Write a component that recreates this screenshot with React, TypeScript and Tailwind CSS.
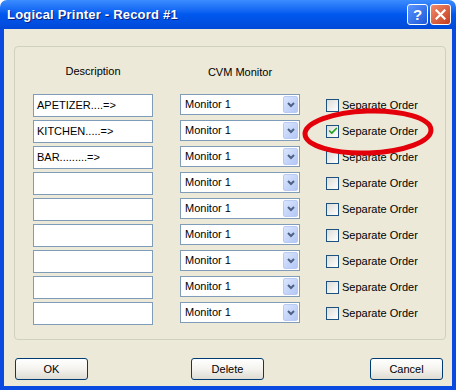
import { Check } from 'lucide-react';

interface Row {
  description: string;
  monitor: string;
  separate: boolean;
}

const rows: Row[] = [
  { description: 'APETIZER....=>', monitor: 'Monitor 1', separate: false },
  { description: 'KITCHEN.....=>', monitor: 'Monitor 1', separate: true },
  { description: 'BAR.........=>', monitor: 'Monitor 1', separate: false },
  { description: '', monitor: 'Monitor 1', separate: false },
  { description: '', monitor: 'Monitor 1', separate: false },
  { description: '', monitor: 'Monitor 1', separate: false },
  { description: '', monitor: 'Monitor 1', separate: false },
  { description: '', monitor: 'Monitor 1', separate: false },
  { description: '', monitor: 'Monitor 1', separate: false },
];

const XpButton = ({ label, className = '' }: { label: string; className?: string }) => (
  <button
    className={
      'w-[73px] h-[22px] rounded-[3px] border border-[#003c74] bg-linear-to-b from-white via-[#f4f3ee] to-[#dedcd2] text-[11px] text-black leading-none ' +
      className
    }
  >
    {label}
  </button>
);

const Combo = ({ value }: { value: string }) => (
  <div className="w-[120px] h-[21px] border border-[#7f9db9] bg-white flex items-center">
    <span className="pl-[4px] text-[11px] text-black">{value}</span>
    <div className="ml-auto mr-[1px] w-[15px] h-[17px] rounded-[2px] border border-[#b9cbf5] bg-linear-to-br from-[#dbe6fd] to-[#b3c7f6] flex items-center justify-center">
      <svg width="8" height="6" viewBox="0 0 8 6">
        <polyline points="1,1 4,4 7,1" fill="none" stroke="#4d6185" strokeWidth="2" />
      </svg>
    </div>
  </div>
);

const CheckBox = ({ checked }: { checked: boolean }) => (
  <div className="w-[13px] h-[13px] border border-[#1c5180] bg-linear-to-br from-[#dcdcd7] to-white flex items-center justify-center">
    {checked && <Check size={10} strokeWidth={4} className="text-[#21a121]" />}
  </div>
);

export default function App() {
  return (
    <div
      className="relative w-[456px] h-[390px] flex flex-col"
      style={{ fontFamily: '"Liberation Sans", Arial, sans-serif' }}
    >
      {/* Title bar */}
      <div className="h-[29px] rounded-t-[7px] bg-linear-to-b from-[#3b8cff] via-[#0058ee] to-[#0049d8] flex items-center pl-[7px] pr-[5px]">
        <span
          className="text-white font-bold text-[13px] tracking-[0.2px]"
          style={{ textShadow: '1px 1px 0 #0a1e80' }}
        >
          Logical Printer - Record #1
        </span>
        <div className="ml-auto flex gap-[2px]">
          <div className="w-[21px] h-[21px] rounded-[3px] border border-white bg-linear-to-br from-[#5a95ff] to-[#1f57d8] flex items-center justify-center text-white font-bold text-[15px] leading-none">
            ?
          </div>
          <div className="w-[21px] h-[21px] rounded-[3px] border border-white bg-linear-to-br from-[#f08a6a] to-[#c53a1a] flex items-center justify-center">
            <svg width="11" height="11" viewBox="0 0 11 11">
              <path d="M1.5 1.5 L9.5 9.5 M9.5 1.5 L1.5 9.5" stroke="white" strokeWidth="2.2" strokeLinecap="square" />
            </svg>
          </div>
        </div>
      </div>

      {/* Body */}
      <div className="flex-1 bg-[#ece9d8] border-x-4 border-b-4 border-[#0a4ae0] flex flex-col pl-[10px] pr-[6px] pt-[17px]">
        {/* Group box */}
        <div className="h-[294px] rounded-[4px] border border-[#d0d0bf] pl-[18px] pt-[17px]">
          <div className="flex text-[11px] text-black h-[14px] items-center">
            <div className="w-[120px] text-center">Description</div>
            <div className="w-[120px] ml-[27px] text-center mt-[2px]">CVM Monitor</div>
          </div>
          <div className="mt-[16px] flex flex-col gap-[3px]">
            {rows.map((row, i) => (
              <div key={i} className="flex items-start h-[23px]">
                <div className="w-[120px] h-[23px] border border-[#7f9db9] bg-white flex items-center pl-[3px] text-[11px] text-black">
                  {row.description}
                </div>
                <div className="ml-[27px]">
                  <Combo value={row.monitor} />
                </div>
                <div className="ml-[26px] flex items-center gap-[3px] h-[22px]">
                  <CheckBox checked={row.separate} />
                  <span className="text-[11px] text-black">Separate Order</span>
                </div>
              </div>
            ))}
          </div>
        </div>

        {/* Buttons */}
        <div className="mt-[18px] flex items-start pl-[1px] pr-[3px]">
          <XpButton label="OK" />
          <XpButton label="Delete" className="ml-[103px]" />
          <XpButton label="Cancel" className="ml-auto" />
        </div>
      </div>

      {/* Red annotation ellipse */}
      <svg className="absolute left-[300px] top-[103px] pointer-events-none" width="138" height="58" viewBox="0 0 138 58">
        <ellipse cx="68" cy="29" rx="63" ry="21" fill="none" stroke="#e4000a" strokeWidth="5" transform="rotate(-2 68 29)" />
      </svg>
    </div>
  );
}
